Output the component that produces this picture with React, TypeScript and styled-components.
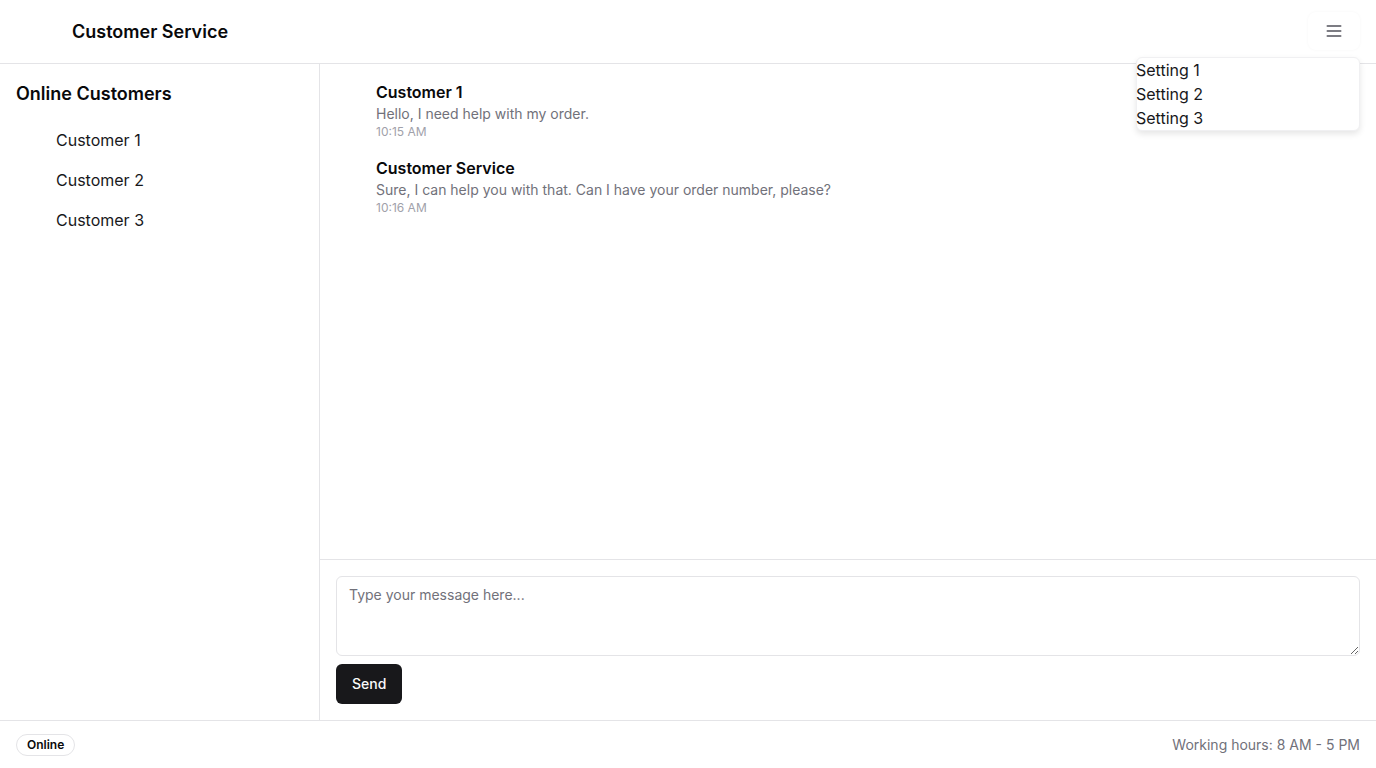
import React from "react";
import styled, { createGlobalStyle } from "styled-components";

const Global = createGlobalStyle`
  * { box-sizing: border-box; }
  html, body { margin: 0; padding: 0; background: #ffffff; }
  body { font-family: Inter, "Noto Sans", sans-serif; color: #09090b; }
`;

const Page = styled.div`
  display: flex;
  flex-direction: column;
  height: 768px;
  width: 1376px;
`;

const Header = styled.header`
  position: relative;
  height: 64px;
  flex: 0 0 64px;
  display: flex;
  align-items: center;
  justify-content: space-between;
  padding: 0 16px;
  border-bottom: 1px solid #e4e4e7;
`;

const TitleGroup = styled.div`
  display: flex;
  align-items: center;
  gap: 16px;
`;

const Spacer = styled.span<{ $w: number }>`
  display: inline-block;
  width: ${(p) => p.$w}px;
  height: 1px;
  flex: 0 0 ${(p) => p.$w}px;
`;

const Title = styled.h1`
  margin: 0;
  font-size: 18px;
  line-height: 28px;
  font-weight: 600;
`;

const MenuButton = styled.button`
  width: 52px;
  height: 38px;
  margin-top: -2px;
  display: flex;
  align-items: center;
  justify-content: center;
  border: none;
  background: #ffffff;
  border-radius: 8px;
  box-shadow: 0 0 3px rgba(0, 0, 0, 0.04);
  color: #52525b;
  padding: 0;
`;

const Dropdown = styled.div`
  position: absolute;
  top: 57px;
  right: 16px;
  width: 224px;
  background: #ffffff;
  border: 1px solid #f0f0f2;
  border-radius: 6px;
  box-shadow: 0 3px 6px rgba(0, 0, 0, 0.1);
  z-index: 10;
`;

const DropItem = styled.div`
  font-size: 16px;
  line-height: 24px;
  color: #18181b;
  margin-left: -1px;
`;

const Body = styled.div`
  flex: 1;
  display: flex;
  min-height: 0;
`;

const Sidebar = styled.aside`
  width: 320px;
  flex: 0 0 320px;
  border-right: 1px solid #e4e4e7;
  padding: 16px;
`;

const SideTitle = styled.h2`
  margin: 0 0 12px;
  font-size: 18px;
  line-height: 28px;
  font-weight: 600;
`;

const CustomerItem = styled.div`
  display: flex;
  align-items: center;
  gap: 8px;
  height: 40px;
  font-size: 16px;
  line-height: 24px;
  color: #18181b;
`;

const Chat = styled.section`
  flex: 1;
  display: flex;
  flex-direction: column;
  min-width: 0;
`;

const Messages = styled.div`
  flex: 1;
  padding: 16px;
  display: flex;
  flex-direction: column;
  gap: 16px;
`;

const Message = styled.div`
  display: flex;
  gap: 8px;
`;

const MessageBody = styled.div`
  display: flex;
  flex-direction: column;
`;

const Sender = styled.div`
  font-size: 16px;
  line-height: 24px;
  font-weight: 600;
`;

const Text = styled.div`
  font-size: 14px;
  line-height: 20px;
  color: #71717a;
`;

const Time = styled.div`
  font-size: 12px;
  line-height: 16px;
  color: #a1a1aa;
`;

const Composer = styled.div`
  border-top: 1px solid #e4e4e7;
  padding: 16px;
  display: flex;
  flex-direction: column;
  align-items: flex-start;
  gap: 8px;
`;

const TextArea = styled.textarea`
  width: 100%;
  height: 80px;
  border: 1px solid #e4e4e7;
  border-radius: 6px;
  padding: 8px 12px;
  font-family: Inter, "Noto Sans", sans-serif;
  font-size: 14px;
  line-height: 20px;
  color: #18181b;
  &::placeholder { color: #71717a; }
`;

const SendButton = styled.button`
  height: 40px;
  padding: 0 16px 1px;
  border: none;
  border-radius: 6px;
  background: #18181b;
  color: #fafafa;
  font-family: Inter, "Noto Sans", sans-serif;
  font-size: 14px;
  font-weight: 500;
`;

const Footer = styled.footer`
  height: 48px;
  flex: 0 0 48px;
  border-top: 1px solid #e4e4e7;
  display: flex;
  align-items: center;
  justify-content: space-between;
  padding: 0 16px;
`;

const Badge = styled.span`
  display: inline-flex;
  align-items: center;
  height: 22px;
  padding: 0 10px;
  border: 1px solid #e4e4e7;
  border-radius: 999px;
  font-size: 12px;
  font-weight: 600;
  color: #09090b;
`;

const Hours = styled.span`
  font-size: 14px;
  line-height: 20px;
  color: #71717a;
`;

const customers = ["Customer 1", "Customer 2", "Customer 3"];
const messages = [
  { sender: "Customer 1", text: "Hello, I need help with my order.", time: "10:15 AM" },
  {
    sender: "Customer Service",
    text: "Sure, I can help you with that. Can I have your order number, please?",
    time: "10:16 AM",
  },
];

const MenuIcon = () => (
  <svg width="20" height="20" viewBox="0 0 24 24" fill="none" stroke="currentColor" strokeWidth="2" strokeLinecap="round">
    <line x1="4" y1="6" x2="20" y2="6" />
    <line x1="4" y1="12" x2="20" y2="12" />
    <line x1="4" y1="18" x2="20" y2="18" />
  </svg>
);

export default function App() {
  return (
    <Page>
      <Global />
      <Header>
        <TitleGroup>
          <Spacer $w={40} />
          <Title>Customer Service</Title>
        </TitleGroup>
        <MenuButton aria-label="menu">
          <MenuIcon />
        </MenuButton>
        <Dropdown>
          <DropItem>Setting 1</DropItem>
          <DropItem>Setting 2</DropItem>
          <DropItem>Setting 3</DropItem>
        </Dropdown>
      </Header>
      <Body>
        <Sidebar>
          <SideTitle>Online Customers</SideTitle>
          {customers.map((c) => (
            <CustomerItem key={c}>
              <Spacer $w={32} />
              {c}
            </CustomerItem>
          ))}
        </Sidebar>
        <Chat>
          <Messages>
            {messages.map((m) => (
              <Message key={m.time}>
                <Spacer $w={32} />
                <MessageBody>
                  <Sender>{m.sender}</Sender>
                  <Text>{m.text}</Text>
                  <Time>{m.time}</Time>
                </MessageBody>
              </Message>
            ))}
          </Messages>
          <Composer>
            <TextArea placeholder="Type your message here..." />
            <SendButton>Send</SendButton>
          </Composer>
        </Chat>
      </Body>
      <Footer>
        <Badge>Online</Badge>
        <Hours>Working hours: 8 AM - 5 PM</Hours>
      </Footer>
    </Page>
  );
}
